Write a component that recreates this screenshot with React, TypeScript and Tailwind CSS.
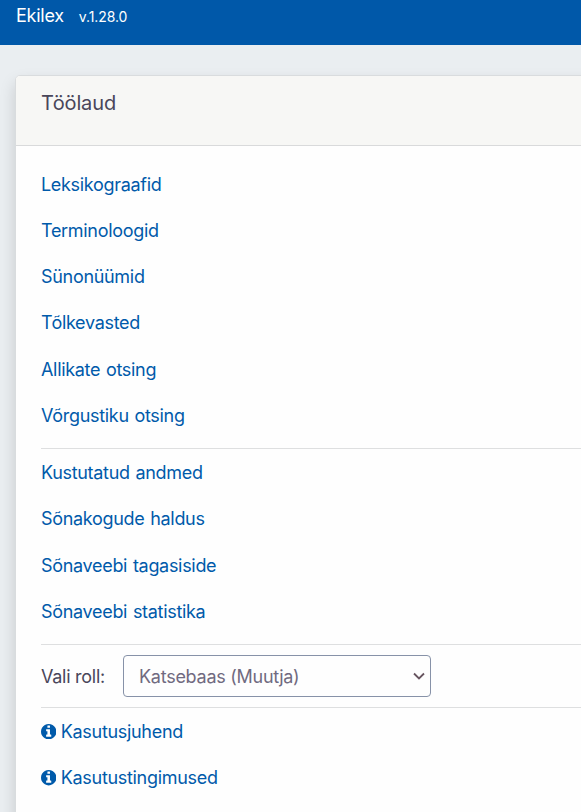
const tools = ["Leksikograafid", "Terminoloogid", "Sünonüümid", "Tõlkevasted", "Allikate otsing", "Võrgustiku otsing"];
const admin = ["Kustutatud andmed", "Sõnakogude haldus", "Sõnaveebi tagasiside", "Sõnaveebi statistika"];
const help = ["Kasutusjuhend", "Kasutustingimused"];

function InfoIcon() {
  return (
    <svg className="mr-[4.4px] size-[15.4px]" viewBox="0 0 1536 1536" fill="currentColor" aria-hidden="true">
      <path d="M1024 1248v-160q0-14-9-23t-23-9h-96v-512q0-14-9-23t-23-9h-320q-14 0-23 9t-9 23v160q0 14 9 23t23 9h96v320h-96q-14 0-23 9t-9 23v160q0 14 9 23t23 9h448q14 0 23-9t9-23zM896 352v-160q0-14-9-23t-23-9h-192q-14 0-23 9t-9 23v160q0 14 9 23t23 9h192q14 0 23-9t9-23zM1536 768q0 209-103 385.5t-279.5 279.5-385.5 103-385.5-103-279.5-279.5-103-385.5 103-385.5 279.5-279.5 385.5-103 385.5 103 279.5 279.5 103 385.5z" />
    </svg>
  );
}

function Links({ items, info = false }: { items: string[]; info?: boolean }) {
  return (
    <nav className="flex flex-col text-[18px] leading-[27px] tracking-[-0.31px] text-[#005aaa] [word-spacing:1px]">
      {items.map((item) => (
        <a key={item} href="#" className="flex h-[46.25px] shrink-0 items-center">
          {info && <InfoIcon />}
          {item}
        </a>
      ))}
    </nav>
  );
}

export default function App() {
  return (
    <div className="h-[812px] overflow-hidden bg-[#eaeef1] font-['Inter',sans-serif] text-[#49465a]">
      <header className="flex h-[45px] items-start bg-[#0058a9] pl-4 pt-1 text-white">
        <span className="text-[18px] leading-6 tracking-[-0.25px]">Ekilex</span>
        <span className="ml-[15px] text-[14px] leading-[26px] tracking-[-0.1px]">v.1.28.0</span>
      </header>
      <main className="ml-[15px] mt-[30px] h-[760px] w-[600px] rounded-[5px] border border-[#d9dcde] bg-[#fefefe] shadow-[0_8px_16px_rgba(0,0,0,0.15)]">
        <h1 className="h-[70px] rounded-tl-[4px] border-b border-[#d9dadb] bg-[#f7f7f5] pl-[25px] pt-[12px] text-[20px] leading-[30px] tracking-[-0.15px]">Töölaud</h1>
        <div className="pl-[25px] pt-[15px]">
          <Links items={tools} />
          <div className="mt-[9.5px] border-t border-[#dedfe0]" />
          <div className="pt-[0.5px]">
            <Links items={admin} />
          </div>
          <div className="mt-[9.5px] flex h-[64px] items-center border-y border-[#dedfe0] text-[18px] tracking-[-0.26px]">
            <label htmlFor="role" className="w-[64px] whitespace-nowrap pt-px">Vali roll:</label>
            <div className="relative ml-[18px]">
              <select id="role" className="h-[42px] w-[308px] appearance-none rounded-[4px] border border-[#8792a8] bg-[#fefefe] pl-[15px] pt-px text-[#706a80]">
                <option>Katsebaas (Muutja)</option>
              </select>
              <svg className="pointer-events-none absolute right-[6px] top-[17px]" width="12" height="9" viewBox="0 0 12 9" fill="none" stroke="#67545f" strokeWidth="1.8"><path d="m1 1.5 5 5 5-5" /></svg>
            </div>
          </div>
          <div className="pt-[0.5px]">
            <Links items={help} info />
          </div>
        </div>
      </main>
    </div>
  );
}
